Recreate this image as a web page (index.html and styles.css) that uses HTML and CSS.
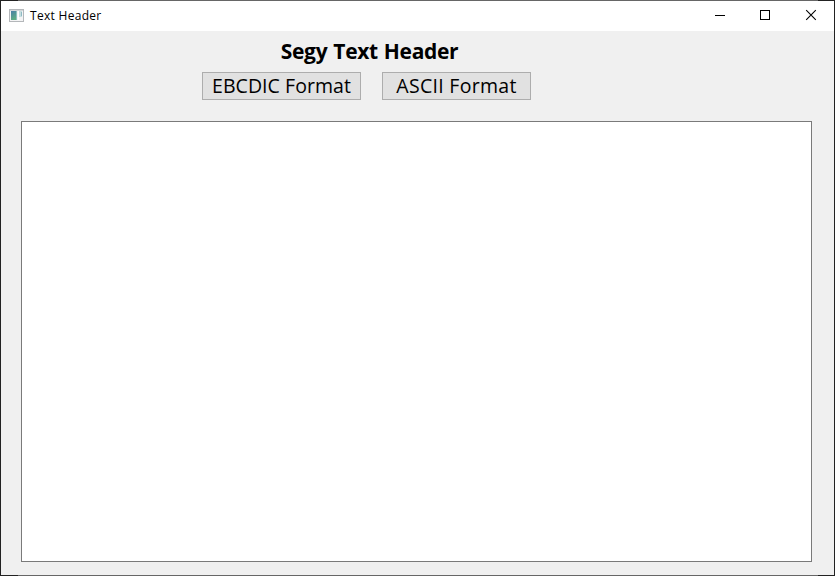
FILE: index.html
```html
<!DOCTYPE html>
<html lang="en">
<head>
<meta charset="utf-8">
<title>Text Header</title>
<link rel="stylesheet" href="styles.css">
</head>
<body>
<div class="window">
  <header class="titlebar">
    <svg class="app-icon" width="16" height="14" viewBox="0 0 16 14" shape-rendering="crispEdges">
      <defs>
        <linearGradient id="pane" x1="0" y1="0" x2="0.4" y2="1"><stop offset="0" stop-color="#4a7fa8"/><stop offset="1" stop-color="#5fae82"/></linearGradient>
      </defs>
      <rect x="0.5" y="0.5" width="14" height="12" fill="#f4f4f5" stroke="#b4b7ba"/>
      <rect x="1" y="1" width="13" height="1" fill="#d3d6d9"/>
      <rect x="2" y="2" width="6" height="9" fill="url(#pane)"/>
      <rect x="7" y="2" width="1" height="9" fill="#8cc0bd"/>
      <rect x="9" y="2" width="1" height="9" fill="#fff"/>
      <rect x="10" y="2" width="3" height="6" fill="#c5dedf"/>
      <rect x="12" y="3" width="1" height="4" fill="#8fb9c4"/>
    </svg>
    <span class="caption">Text Header</span>
    <div class="controls">
      <svg width="45" height="30" shape-rendering="crispEdges"><path d="M17 14.5h10" stroke="#000"/></svg>
      <svg width="46" height="30" shape-rendering="crispEdges"><rect x="17.5" y="9.5" width="9" height="9" fill="none" stroke="#000"/></svg>
      <svg width="45" height="30"><path d="M17.2 9.2l9.6 9.6M26.8 9.2l-9.6 9.6" stroke="#000" stroke-width="1.1"/></svg>
    </div>
  </header>
  <main class="content">
    <h1 class="heading">Segy Text Header</h1>
    <div class="actions">
      <button class="btn btn-ebcdic"><span>EBCDIC Format</span></button>
      <button class="btn btn-ascii"><span>ASCII Format</span></button>
    </div>
    <div class="text-view"></div>
  </main>
</div>
</body>
</html>
```
FILE: styles.css
```css
* { box-sizing: border-box; }
body {
  margin: 0;
  overflow: hidden;
  font-family: "Open Sans", "Noto Sans", sans-serif;
  color: #000;
}
.window {
  display: flex;
  flex-direction: column;
  width: 835px;
  height: 576px;
  padding: 1px;
  background: linear-gradient(90deg, #222 18px, #666 18px, #666 818px, #222 818px);
}
.titlebar {
  display: flex;
  align-items: center;
  height: 30px;
  padding-left: 8px;
  background: #fff;
}
.app-icon { display: block; }
.caption {
  margin-left: 5px;
  font-size: 12px;
  line-height: 16px;
  letter-spacing: 0.3px;
  white-space: nowrap;
}
.controls { display: flex; margin-left: auto; }
.controls svg { display: block; }
.content {
  display: flex;
  flex-direction: column;
  flex: 1;
  padding: 6px 22px 13px 20px;
  background: #f0f0f0;
}
.heading {
  width: 697px;
  height: 30px;
  margin: 0;
  font-size: 21px;
  line-height: 29px;
  font-weight: 700;
  letter-spacing: -0.35px;
  word-spacing: 1px;
  text-align: center;
  white-space: nowrap;
}
.actions {
  display: flex;
  gap: 21px;
  margin: 5px 0 21px 181px;
}
.btn {
  display: flex;
  align-items: center;
  justify-content: center;
  height: 28px;
  padding: 0;
  border: 1px solid #adadad;
  background: #e1e1e1;
  color: #000;
  font: 19.5px/26px "Open Sans", "Noto Sans", sans-serif;
  white-space: nowrap;
}
.btn-ebcdic { width: 159px; letter-spacing: 0.05px; }
.btn-ascii { width: 149px; letter-spacing: 0.3px; }
.text-view {
  flex: 1;
  border: 1px solid #7a7a7a;
  background: #fff;
}
```
